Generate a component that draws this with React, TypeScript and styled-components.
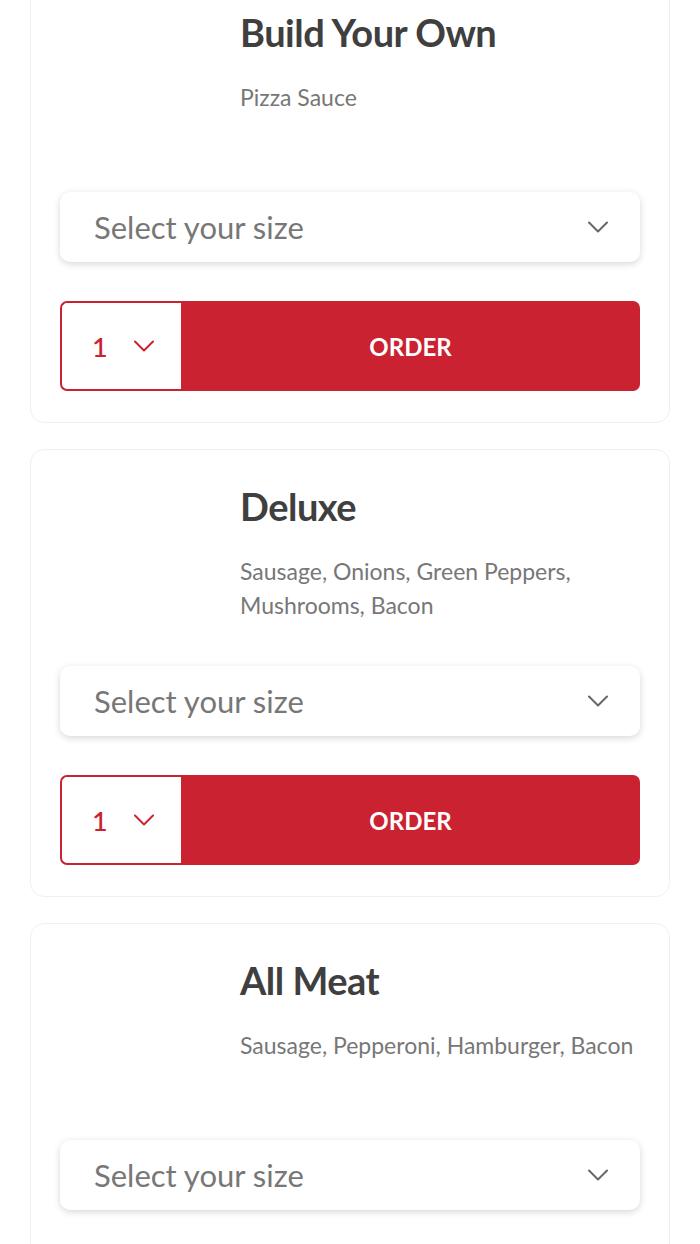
import React from 'react';
import styled, { createGlobalStyle } from 'styled-components';

const GlobalStyle = createGlobalStyle`
  body {
    margin: 0;
    background: #fff;
    font-family: Lato, "Open Sans", sans-serif;
  }
`;

const List = styled.div`
  display: flex;
  flex-direction: column;
  gap: 26px;
  padding: 0 30px;
  margin-top: -25px;
`;

const Card = styled.div`
  border: 1px solid #f0f0f0;
  border-radius: 14px;
  padding: 29px 29px 31px;
  background: #fff;
`;

const Header = styled.div`
  display: flex;
  gap: 30px;
  height: 148px;
  margin-bottom: 39px;
`;

const Thumb = styled.div`
  width: 150px;
  flex-shrink: 0;
`;

const Info = styled.div`
  padding-top: 4px;
  min-width: 0;
`;

const Title = styled.h3`
  margin: 0 0 25px;
  font-size: 38px;
  line-height: 46px;
  font-weight: 700;
  color: #3f3f3f;
  letter-spacing: -0.5px;
`;

const Description = styled.p`
  margin: 0;
  font-size: 23px;
  line-height: 34px;
  color: #777;
`;

const SizeSelect = styled.div`
  height: 70px;
  border-radius: 10px;
  background: #fff;
  box-shadow: 0 2px 7px rgba(0, 0, 0, 0.16);
  display: flex;
  align-items: center;
  justify-content: space-between;
  padding: 0 32px 0 34px;
  margin-bottom: 39px;
  font-size: 31px;
  color: #777;
`;

const OrderRow = styled.div`
  display: flex;
  height: 90px;
`;

const Quantity = styled.div`
  width: 121px;
  box-sizing: border-box;
  border: 2px solid #cb2231;
  border-right: none;
  border-radius: 7px 0 0 7px;
  display: flex;
  align-items: center;
  gap: 26px;
  padding-left: 30px;
  color: #cb2231;
  font-size: 27px;
  font-weight: 500;
`;

const OrderButton = styled.button`
  flex: 1;
  border: none;
  border-radius: 0 7px 7px 0;
  background: #cb2231;
  color: #fff;
  font-family: inherit;
  font-size: 24px;
  font-weight: 700;
  cursor: pointer;
`;

const Chevron = ({ color }: { color: string }) => (
  <svg width="20" height="12" viewBox="0 0 20 12" fill="none">
    <path d="M1 1.5l9 9 9-9" stroke={color} strokeWidth="2" strokeLinecap="round" strokeLinejoin="round" />
  </svg>
);

const pizzas = [
  { name: 'Build Your Own', toppings: 'Pizza Sauce' },
  { name: 'Deluxe', toppings: 'Sausage, Onions, Green Peppers, Mushrooms, Bacon' },
  { name: 'All Meat', toppings: 'Sausage, Pepperoni, Hamburger, Bacon' },
];

const App: React.FC = () => (
  <>
    <GlobalStyle />
    <List>
      {pizzas.map(p => (
        <Card key={p.name}>
          <Header>
            <Thumb />
            <Info>
              <Title>{p.name}</Title>
              <Description>{p.toppings}</Description>
            </Info>
          </Header>
          <SizeSelect>
            <span>Select your size</span>
            <Chevron color="#666" />
          </SizeSelect>
          <OrderRow>
            <Quantity>
              <span>1</span>
              <Chevron color="#cb2231" />
            </Quantity>
            <OrderButton>ORDER</OrderButton>
          </OrderRow>
        </Card>
      ))}
    </List>
  </>
);

export default App;
